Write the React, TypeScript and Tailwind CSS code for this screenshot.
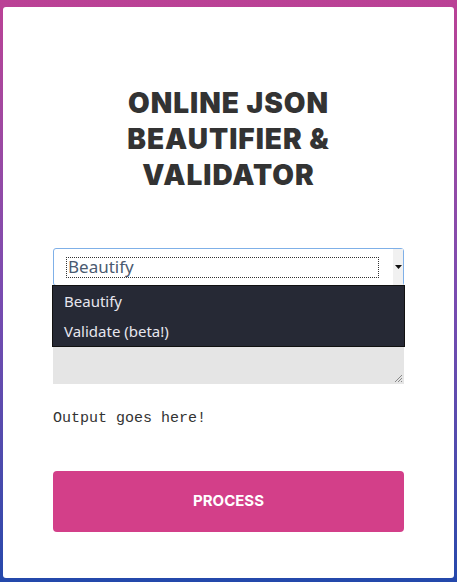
export default function App() {
  return (
    <div className="h-[582px] w-[457px] bg-gradient-to-b from-[#bb4195] via-[#7a4bb0] to-[#2348ab] px-[3px] pt-[7px] pb-[4px]">
      <div className="flex h-full flex-col rounded-[3px] bg-white px-[50px] pt-[78px]">
        <h1 className="text-center font-['Inter',sans-serif] text-[28px] font-black leading-[36px] tracking-[1px] text-[#333]">
          ONLINE JSON
          <br />
          BEAUTIFIER &amp;
          <br />
          VALIDATOR
        </h1>

        <div className="relative mt-[55px]">
          {/* select, open */}
          <div className="flex h-[38px] items-center rounded-[3px] border border-[#7fb0e8] bg-white pl-[12px]">
            <div className="flex h-[21px] flex-1 items-center border border-dotted border-[#333] px-[1px] font-['Noto_Sans',sans-serif] text-[17px] text-[#4a5a70]">
              Beautify
            </div>
            <div className="ml-[14px] flex h-full w-[10px] items-center justify-center bg-[#f1f1f1]">
              <svg width="7" height="4" viewBox="0 0 7 4">
                <path d="M0 0h7L3.5 4z" fill="#111" />
              </svg>
            </div>
          </div>

          <div className="relative mt-[10px] h-[88px] bg-[#e5e5e5]">
            <svg className="absolute bottom-[1px] right-[1px]" width="9" height="9" viewBox="0 0 9 9">
              <path d="M8 1L1 8M8 4L4 8M8 7L7 8" stroke="#888" strokeWidth="1" />
            </svg>
          </div>

          <div className="absolute left-[-1px] right-[-1px] top-[37px] border border-[#111] bg-[#262935] py-[0px] font-['Noto_Sans',sans-serif] text-[15px] text-[#e6e6ee]">
            <div className="h-[30px] px-[11px] leading-[30px]">Beautify</div>
            <div className="h-[30px] px-[11px] leading-[30px]">Validate (beta!)</div>
          </div>
        </div>

        <p className="mt-[25px] font-['Liberation_Mono',monospace] text-[15px] leading-[20px] text-[#333]">
          Output goes here!
        </p>

        <button className="mt-[42px] h-[61px] w-full rounded-[4px] bg-[#d33f89] font-['Inter',sans-serif] text-[15px] font-bold text-white">
          PROCESS
        </button>
      </div>
    </div>
  );
}
